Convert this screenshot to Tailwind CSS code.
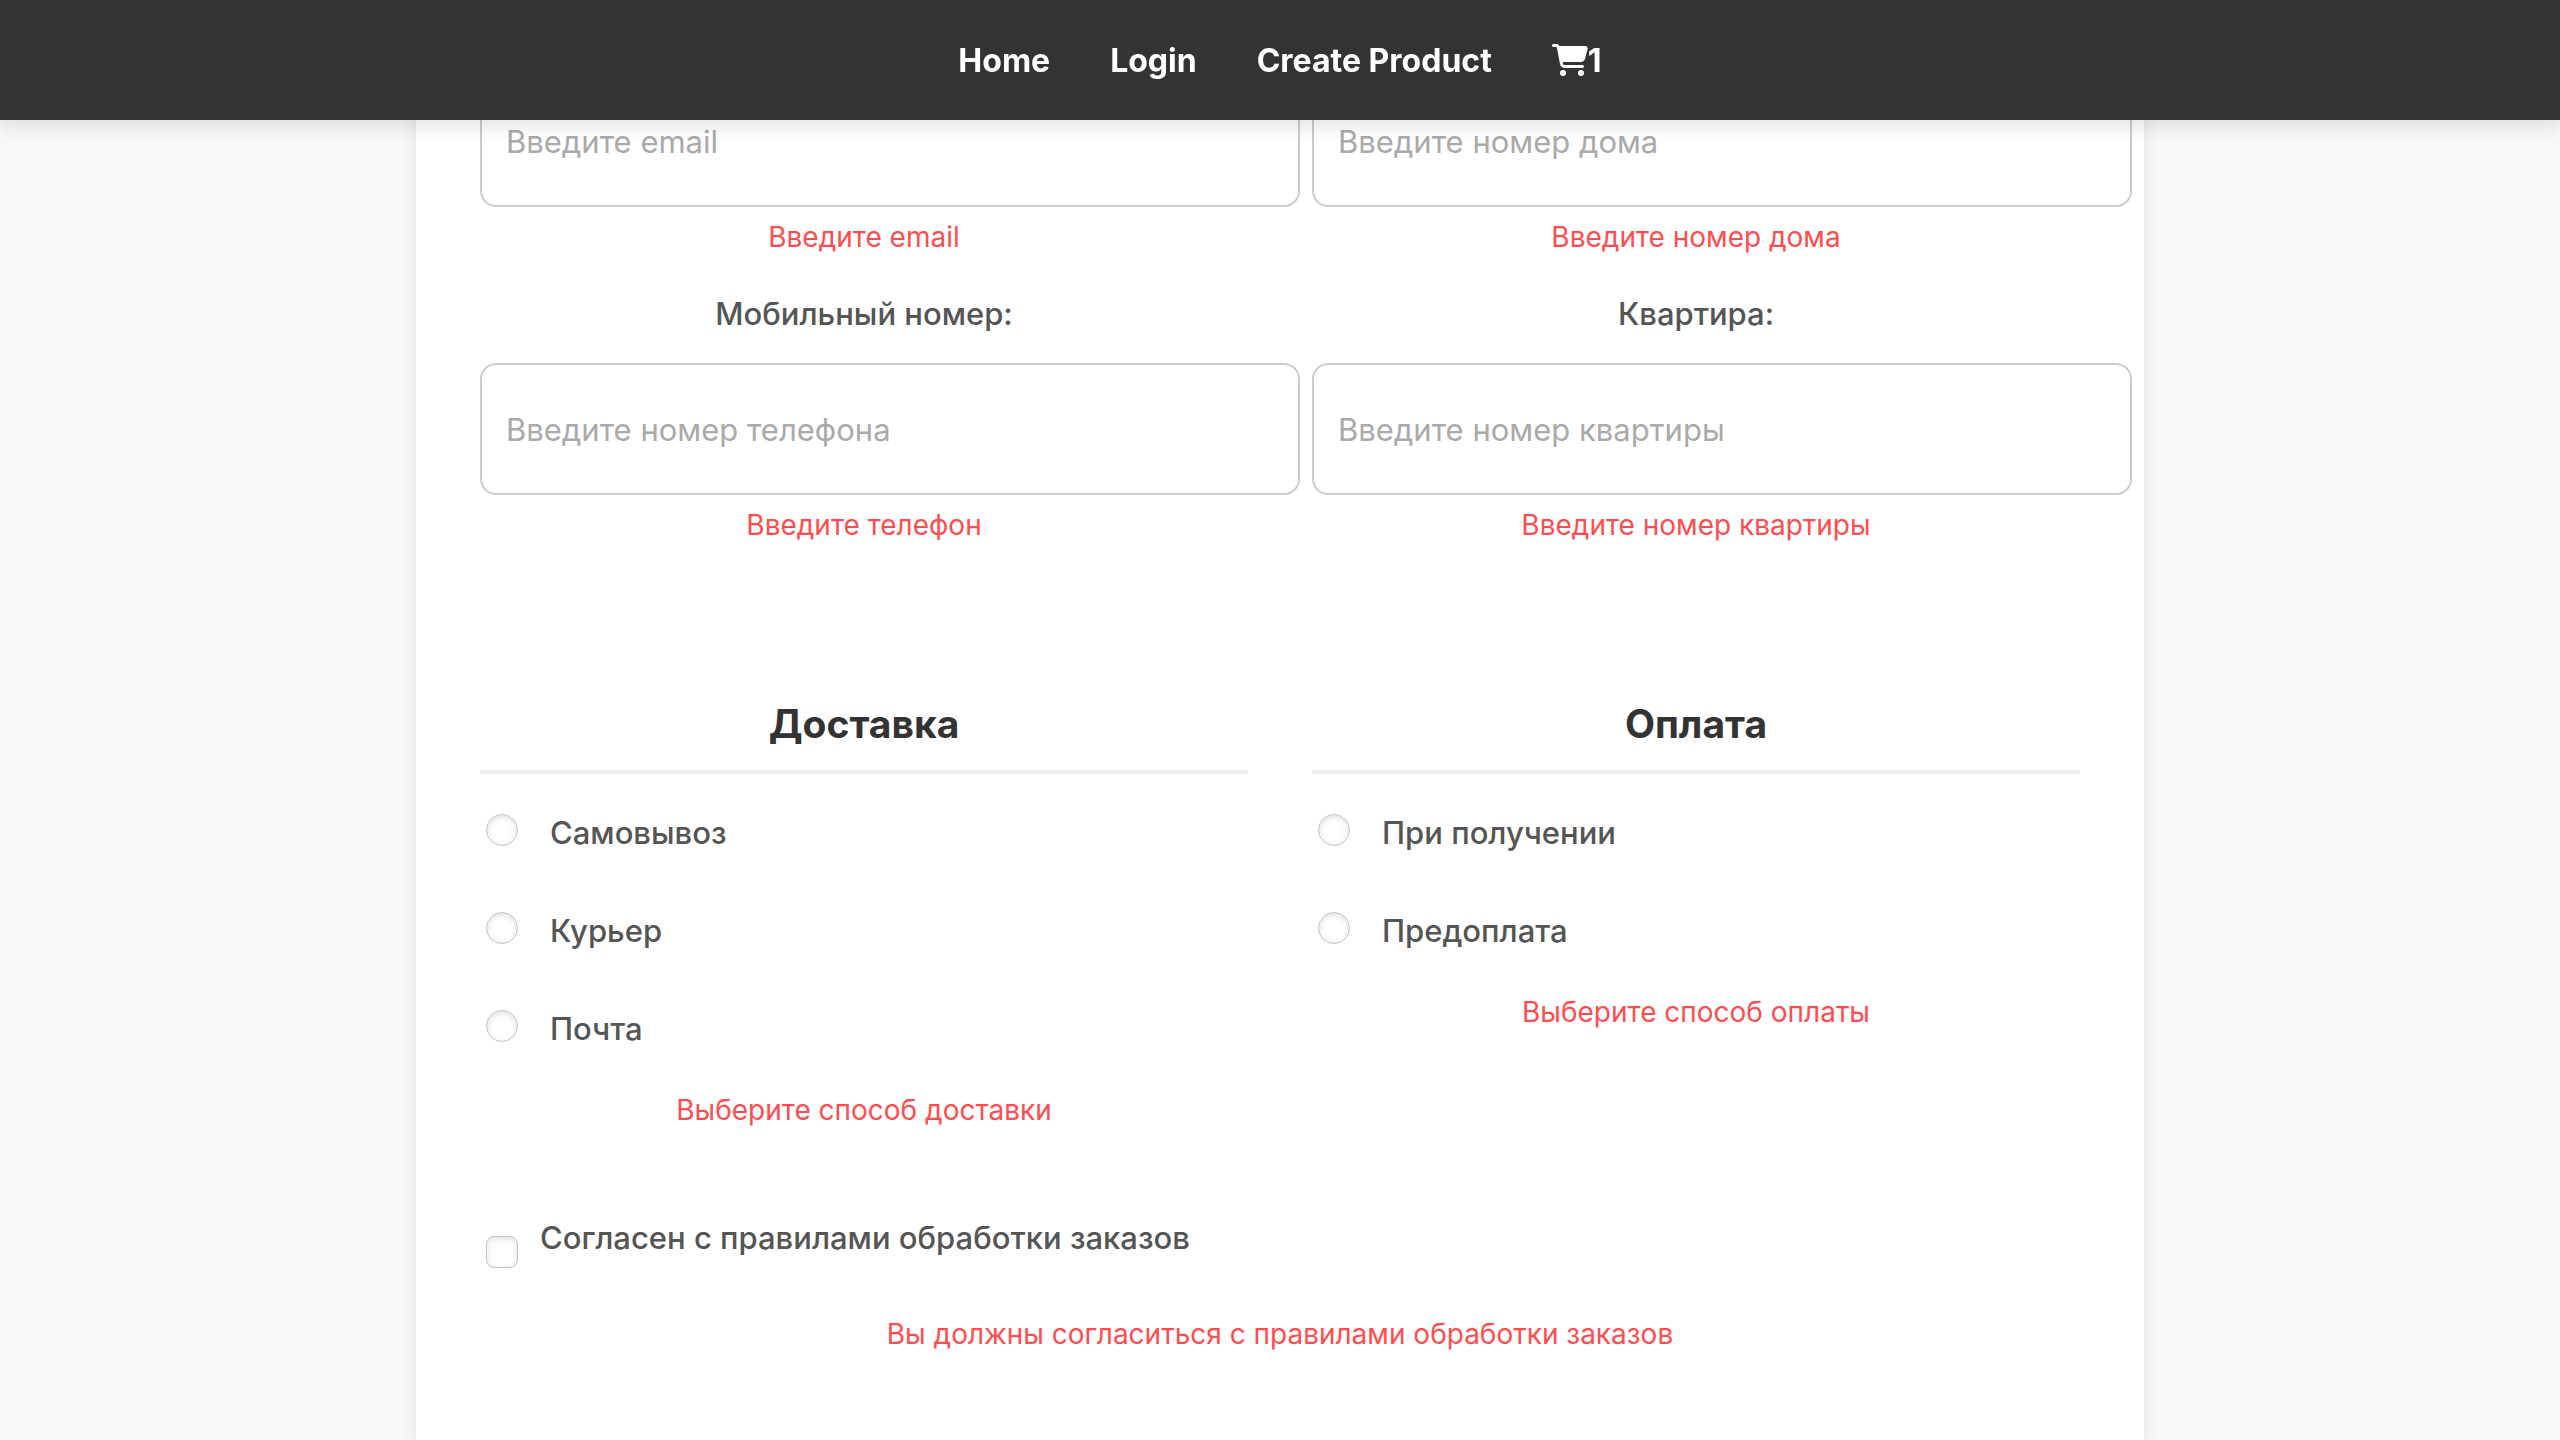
<!DOCTYPE html>
<html lang="ru">
<head>
<meta charset="utf-8">
<meta name="viewport" content="width=device-width, initial-scale=1">
<title>Оформление заказа</title>
<script src="https://cdn.jsdelivr.net/npm/@tailwindcss/browser@4"></script>
</head>
<body class="min-h-screen bg-[#f9f9f9] font-['Inter',sans-serif] text-[31px] leading-10 text-[#555]">

<header class="fixed inset-x-0 top-0 z-10 bg-[#333] shadow-[0_8px_16px_rgba(0,0,0,0.1)]">
  <nav class="flex h-[120px] items-center justify-center gap-[60px] pt-[2px] text-[32px] font-bold text-white">
    <a href="#">Home</a>
    <a href="#">Login</a>
    <a href="#">Create Product</a>
    <a href="#" class="flex items-center" aria-label="Корзина: 1">
      <svg class="mb-0.5 h-8 w-9" viewBox="0 0 576 512" fill="currentColor" aria-hidden="true"><path d="M0 24C0 10.700 10.700 0 24 0H69.500c22 0 41.500 12.800 50.600 32h411c26.300 0 45.500 25 38.600 50.400l-41 152.300c-8.500 31.400-37 53.300-69.500 53.300H170.700l5.400 28.500c2.200 11.300 12.100 19.500 23.600 19.500H488c13.300 0 24 10.700 24 24s-10.700 24-24 24H199.700c-34.600 0-64.300-24.600-70.700-58.500L77.400 54.500c-.7-3.800-4-6.500-7.900-6.500H24C10.700 48 0 37.300 0 24zM128 464a48 48 0 1 1 96 0 48 48 0 1 1-96 0zm336-48a48 48 0 1 1 0 96 48 48 0 1 1 0-96z"/></svg>
      <span>1</span>
    </a>
  </nav>
</header>

<main class="mx-auto min-h-screen w-full max-w-[1728px] bg-white px-16 pt-[75px] pb-16 shadow-[0_8px_16px_rgba(0,0,0,0.1)]">
  <form>
    <div class="grid grid-cols-2 gap-x-16">
      <div>
        <input type="email" aria-label="Email" placeholder="Введите email" class="block h-[132px] w-[calc(100%+52px)] rounded-2xl border-2 border-[#ccc] px-6 placeholder:text-[#aaa]">
        <p class="mt-2.5 text-center text-[28px] leading-10 text-[#ff4d4f]">Введите email</p>
      </div>
      <div>
        <input type="text" aria-label="Номер дома" placeholder="Введите номер дома" class="block h-[132px] w-[calc(100%+52px)] rounded-2xl border-2 border-[#ccc] px-6 placeholder:text-[#aaa]">
        <p class="mt-2.5 text-center text-[28px] leading-10 text-[#ff4d4f]">Введите номер дома</p>
      </div>
      <div class="mt-[37px]">
        <label for="phone" class="mb-[29px] block text-center font-medium">Мобильный номер:</label>
        <input id="phone" type="tel" placeholder="Введите номер телефона" class="block h-[132px] w-[calc(100%+52px)] rounded-2xl border-2 border-[#ccc] px-6 placeholder:text-[#aaa]">
        <p class="mt-2.5 text-center text-[28px] leading-10 text-[#ff4d4f]">Введите телефон</p>
      </div>
      <div class="mt-[37px]">
        <label for="flat" class="mb-[29px] block text-center font-medium">Квартира:</label>
        <input id="flat" type="text" placeholder="Введите номер квартиры" class="block h-[132px] w-[calc(100%+52px)] rounded-2xl border-2 border-[#ccc] px-6 placeholder:text-[#aaa]">
        <p class="mt-2.5 text-center text-[28px] leading-10 text-[#ff4d4f]">Введите номер квартиры</p>
      </div>
    </div>

    <div class="mt-[149px] grid grid-cols-2 gap-x-16">
      <section>
        <h3 class="mb-2.5 border-b-4 border-[#f0f0f0] pb-4 text-center text-[39px] leading-[60px] font-bold text-[#333]">Доставка</h3>
        <label class="flex h-[98px] items-center gap-8 font-medium">
          <input type="radio" name="delivery" class="mb-1.5 ml-1.5 size-8 appearance-none rounded-full border border-[#c4c4c4] bg-white shadow-[inset_0_2px_6px_rgba(0,0,0,0.12)] checked:bg-[#333]">
          Самовывоз
        </label>
        <label class="flex h-[98px] items-center gap-8 font-medium">
          <input type="radio" name="delivery" class="mb-1.5 ml-1.5 size-8 appearance-none rounded-full border border-[#c4c4c4] bg-white shadow-[inset_0_2px_6px_rgba(0,0,0,0.12)] checked:bg-[#333]">
          Курьер
        </label>
        <label class="flex h-[98px] items-center gap-8 font-medium">
          <input type="radio" name="delivery" class="mb-1.5 ml-1.5 size-8 appearance-none rounded-full border border-[#c4c4c4] bg-white shadow-[inset_0_2px_6px_rgba(0,0,0,0.12)] checked:bg-[#333]">
          Почта
        </label>
        <p class="mt-3 text-center text-[28px] leading-10 text-[#ff4d4f]">Выберите способ доставки</p>
      </section>
      <section>
        <h3 class="mb-2.5 border-b-4 border-[#f0f0f0] pb-4 text-center text-[39px] leading-[60px] font-bold text-[#333]">Оплата</h3>
        <label class="flex h-[98px] items-center gap-8 font-medium">
          <input type="radio" name="payment" class="mb-1.5 ml-1.5 size-8 appearance-none rounded-full border border-[#c4c4c4] bg-white shadow-[inset_0_2px_6px_rgba(0,0,0,0.12)] checked:bg-[#333]">
          При получении
        </label>
        <label class="flex h-[98px] items-center gap-8 font-medium">
          <input type="radio" name="payment" class="mb-1.5 ml-1.5 size-8 appearance-none rounded-full border border-[#c4c4c4] bg-white shadow-[inset_0_2px_6px_rgba(0,0,0,0.12)] checked:bg-[#333]">
          Предоплата
        </label>
        <p class="mt-3 text-center text-[28px] leading-10 text-[#ff4d4f]">Выберите способ оплаты</p>
      </section>
    </div>

    <label class="mt-[88px] flex items-start gap-[22px] font-medium">
      <input type="checkbox" class="mt-[18px] ml-1.5 size-8 appearance-none rounded-lg border border-[#c4c4c4] bg-white shadow-[inset_0_2px_6px_rgba(0,0,0,0.12)] checked:bg-[#333]">
      Согласен с правилами обработки заказов
    </label>
    <p class="mt-[46px] text-center text-[28px] leading-10 text-[#ff4d4f]">Вы должны согласиться с правилами обработки заказов</p>
  </form>
</main>
</body>
</html>
